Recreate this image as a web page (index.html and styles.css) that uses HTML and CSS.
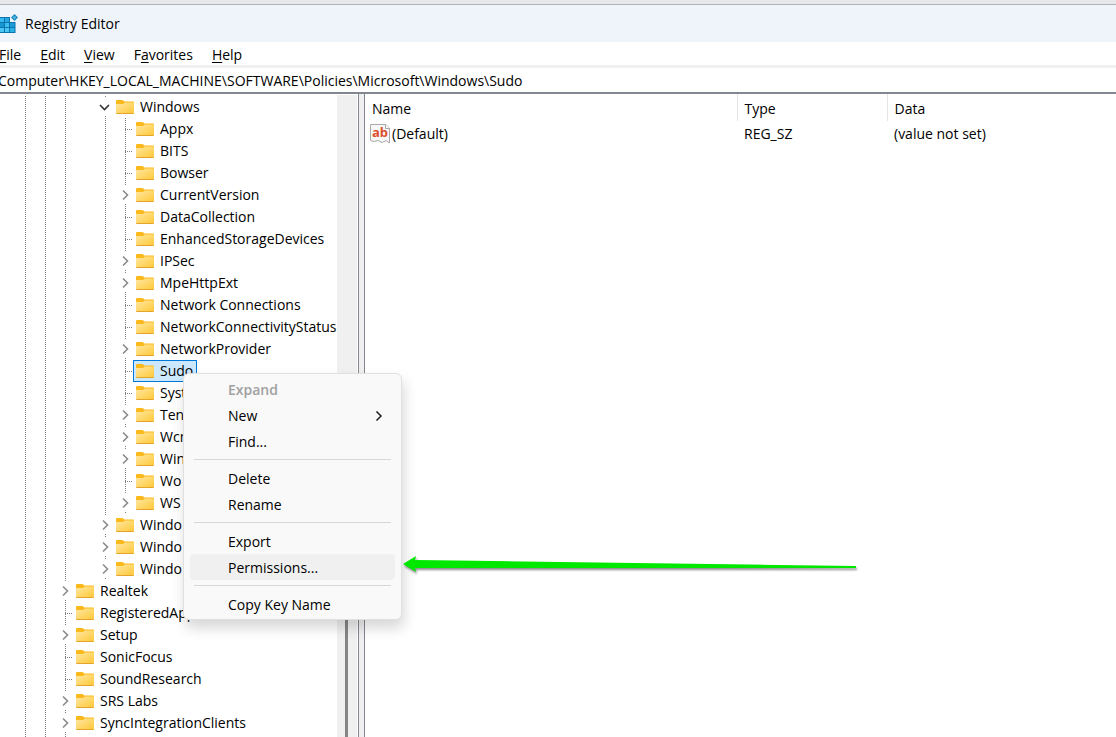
FILE: index.html
```
<!DOCTYPE html>
<html lang="en">

<head>
    <meta charset="UTF-8" />
    <meta name="viewport" content="width=device-width, initial-scale=1.0" />
    <title>Registry Editor</title>
    <link rel="stylesheet" href="styles.css">
</head>

<body>
    <!-- shared icons -->
    <svg class="icon-defs" aria-hidden="true">
        <defs>
            <linearGradient id="folderFill" x1="0" y1="0" x2="1" y2="1">
                <stop offset="0" stop-color="#ffe8a3" />
                <stop offset="1" stop-color="#ffc83a" />
            </linearGradient>
            <symbol id="folder" viewBox="0 0 18 14">
                <path d="M0 1Q0 0 1 0H6.5L8.5 1.500H17.500L18 2V6H0Z" fill="#fbb91c" />
                <path d="M0 4H7L9 2.500H18V13H0Z" fill="url(#folderFill)" />
                <path d="M0 13H18L17.500 14H0.500Z" fill="#e5a52a" />
            </symbol>
            <symbol id="chevron" viewBox="0 0 20 18">
                <path d="M8 4.5L12.5 9L8 13.5" fill="none" stroke="#8b8b8b" stroke-width="1.6" />
            </symbol>
            <symbol id="chevron-open" viewBox="0 0 20 18">
                <path d="M5 7L9.5 11.5L14 7" fill="none" stroke="#333" stroke-width="1.6" />
            </symbol>
        </defs>
    </svg>

    <div class="window">
        <header class="title-bar">
            <svg class="app-icon" viewBox="0 0 20 20" aria-hidden="true">
                <path d="M0 3H12V8H17.500V19H0Z" fill="#0a74ad" />
                <path d="M1 4H6V8H1Z" fill="#35b8ee" />
                <path d="M7 4H11V8H7Z" fill="#27a6e0" />
                <path d="M1 9H6V13H1Z" fill="#1796d4" />
                <path d="M7 9H11V13H7Z" fill="#3dbdf0" />
                <path d="M12 9H16.500V13H12Z" fill="#1c9bd8" />
                <path d="M1 14H6V18H1ZM7 14H11V18H7Z" fill="#4cc6f4" />
                <path d="M12 14H16.500V18H12Z" fill="#2bb0e8" />
                <path d="M16.500 0L20 3.500L16.500 7L13 3.500Z" fill="#1b86bb" />
                <path d="M16.500 1.500L18.500 3.500L16.500 5.500L14.500 3.500Z" fill="#49b4de" />
            </svg>
            <h1 class="title">Registry Editor</h1>
        </header>

        <nav class="menu-bar">
            <button type="button"><u>F</u>ile</button>
            <button type="button"><u>E</u>dit</button>
            <button type="button"><u>V</u>iew</button>
            <button type="button">F<u>a</u>vorites</button>
            <button type="button"><u>H</u>elp</button>
        </nav>

        <input class="address" type="text" aria-label="Address"
            value="Computer\HKEY_LOCAL_MACHINE\SOFTWARE\Policies\Microsoft\Windows\Sudo" />

        <main class="panes">
            <div class="tree-pane">
                <div class="tree">
                    <ul class="lined">
                        <li>
                            <ul class="lined">
                                <li>
                                    <ul class="lined">
                                        <li>
                                            <!-- last key of its branch, so no line here -->
                                            <ul>
                                                <li>
                                                    <ul class="lined">
                                                        <li>
                                                            <div class="row"><svg class="toggle"><use href="#chevron-open" /></svg><span class="key"><svg class="folder"><use href="#folder" /></svg>Windows</span></div>
                                                            <ul class="lined">
                                                                <li class="row leaf"><span class="key"><svg class="folder"><use href="#folder" /></svg>Appx</span></li>
                                                                <li class="row leaf"><span class="key"><svg class="folder"><use href="#folder" /></svg>BITS</span></li>
                                                                <li class="row leaf"><span class="key"><svg class="folder"><use href="#folder" /></svg>Bowser</span></li>
                                                                <li class="row"><svg class="toggle"><use href="#chevron" /></svg><span class="key"><svg class="folder"><use href="#folder" /></svg>CurrentVersion</span></li>
                                                                <li class="row leaf"><span class="key"><svg class="folder"><use href="#folder" /></svg>DataCollection</span></li>
                                                                <li class="row leaf"><span class="key"><svg class="folder"><use href="#folder" /></svg>EnhancedStorageDevices</span></li>
                                                                <li class="row"><svg class="toggle"><use href="#chevron" /></svg><span class="key"><svg class="folder"><use href="#folder" /></svg>IPSec</span></li>
                                                                <li class="row"><svg class="toggle"><use href="#chevron" /></svg><span class="key"><svg class="folder"><use href="#folder" /></svg>MpeHttpExt</span></li>
                                                                <li class="row leaf"><span class="key"><svg class="folder"><use href="#folder" /></svg>Network Connections</span></li>
                                                                <li class="row leaf"><span class="key"><svg class="folder"><use href="#folder" /></svg>NetworkConnectivityStatus</span></li>
                                                                <li class="row"><svg class="toggle"><use href="#chevron" /></svg><span class="key"><svg class="folder"><use href="#folder" /></svg>NetworkProvider</span></li>
                                                                <li class="row leaf"><span class="key selected"><svg class="folder"><use href="#folder" /></svg>Sudo</span></li>
                                                                <li class="row leaf"><span class="key"><svg class="folder"><use href="#folder" /></svg>Syst</span></li>
                                                                <li class="row"><svg class="toggle"><use href="#chevron" /></svg><span class="key"><svg class="folder"><use href="#folder" /></svg>Ten</span></li>
                                                                <li class="row"><svg class="toggle"><use href="#chevron" /></svg><span class="key"><svg class="folder"><use href="#folder" /></svg>Wcm</span></li>
                                                                <li class="row"><svg class="toggle"><use href="#chevron" /></svg><span class="key"><svg class="folder"><use href="#folder" /></svg>Win</span></li>
                                                                <li class="row leaf"><span class="key"><svg class="folder"><use href="#folder" /></svg>Wo</span></li>
                                                                <li class="row"><svg class="toggle"><use href="#chevron" /></svg><span class="key"><svg class="folder"><use href="#folder" /></svg>WS</span></li>
                                                            </ul>
                                                        </li>
                                                        <li class="row"><svg class="toggle"><use href="#chevron" /></svg><span class="key"><svg class="folder"><use href="#folder" /></svg>Windo</span></li>
                                                        <li class="row"><svg class="toggle"><use href="#chevron" /></svg><span class="key"><svg class="folder"><use href="#folder" /></svg>Windo</span></li>
                                                        <li class="row"><svg class="toggle"><use href="#chevron" /></svg><span class="key"><svg class="folder"><use href="#folder" /></svg>Windo</span></li>
                                                    </ul>
                                                </li>
                                            </ul>
                                        </li>
                                        <li class="row"><svg class="toggle"><use href="#chevron" /></svg><span class="key"><svg class="folder"><use href="#folder" /></svg>Realtek</span></li>
                                        <li class="row leaf"><span class="key"><svg class="folder"><use href="#folder" /></svg>RegisteredApp</span></li>
                                        <li class="row"><svg class="toggle"><use href="#chevron" /></svg><span class="key"><svg class="folder"><use href="#folder" /></svg>Setup</span></li>
                                        <li class="row leaf"><span class="key"><svg class="folder"><use href="#folder" /></svg>SonicFocus</span></li>
                                        <li class="row leaf"><span class="key"><svg class="folder"><use href="#folder" /></svg>SoundResearch</span></li>
                                        <li class="row"><svg class="toggle"><use href="#chevron" /></svg><span class="key"><svg class="folder"><use href="#folder" /></svg>SRS Labs</span></li>
                                        <li class="row"><svg class="toggle"><use href="#chevron" /></svg><span class="key"><svg class="folder"><use href="#folder" /></svg>SyncIntegrationClients</span></li>
                                    </ul>
                                </li>
                            </ul>
                        </li>
                    </ul>
                </div>
                <div class="scrollbar">
                    <div class="thumb"></div>
                </div>
            </div>

            <div class="splitter"></div>

            <div class="value-pane">
                <table class="values">
                    <thead>
                        <tr>
                            <th class="col-name">Name</th>
                            <th class="col-type">Type</th>
                            <th>Data</th>
                        </tr>
                    </thead>
                    <tbody>
                        <tr>
                            <td>
                                <span class="value-name">
                                    <svg class="string-icon" viewBox="0 0 20 20" aria-hidden="true">
                                        <path d="M0.500 0.500H15.500L19.500 4V19L16 16.500L12 18.500L8 16.500L4 17.500L0.500 16.500Z" fill="#f7f7f7" stroke="#a9a9a9" />
                                        <path d="M15.500 0.500V4.500H19.500" fill="#fff" stroke="#a9a9a9" />
                                        <text x="2" y="13">ab</text>
                                    </svg>
                                    (Default)
                                </span>
                            </td>
                            <td>REG_SZ</td>
                            <td>(value not set)</td>
                        </tr>
                    </tbody>
                </table>
            </div>
        </main>

        <!-- right click menu of the selected key -->
        <div class="context-menu">
            <button type="button" class="default" disabled>Expand</button>
            <button type="button">New
                <svg class="more" viewBox="0 0 8 10" aria-hidden="true">
                    <path d="M1.500 0.500L6 5L1.500 9.500" />
                </svg>
            </button>
            <button type="button">Find...</button>
            <hr />
            <button type="button">Delete</button>
            <button type="button">Rename</button>
            <hr />
            <button type="button">Export</button>
            <button type="button" class="active">Permissions...</button>
            <hr />
            <button type="button">Copy Key Name</button>
        </div>

        <!-- green pointer to Permissions -->
        <svg class="pointer" viewBox="0 0 460 24" aria-hidden="true">
            <path d="M1 8L14 0L13 4L454 10V12L13 12L14 16Z" />
        </svg>
    </div>
</body>

</html>
```

FILE: styles.css
```
* {
    box-sizing: border-box;
}

body {
    margin: 0;
    background-color: #fff;
    color: #000;
    font-family: "Open Sans", "Noto Sans", sans-serif;
    font-size: 14px;
    line-height: 20px;
}

button,
input {
    font: inherit;
    color: inherit;
    border: none;
    background: none;
    padding: 0;
}

ul {
    list-style: none;
    margin: 0;
    padding: 0;
}

.icon-defs {
    position: absolute;
    width: 0;
    height: 0;
}

.window {
    position: relative;
    display: flex;
    flex-direction: column;
    height: 100vh;
    overflow: hidden;
}

/* title, menu and address bars */
.title-bar {
    display: flex;
    align-items: center;
    gap: 7px;
    height: 42px;
    padding-top: 2px;
    margin-left: -2px;
    background-color: #eff3fa;
    border-top: 4px solid #e6e8eb;
    box-shadow: inset 0 1px #b4b4b4;
    flex-shrink: 0;
}

.app-icon {
    width: 20px;
    height: 20px;
}

.title {
    margin: 0;
    font-size: 14px;
    font-weight: normal;
}

.menu-bar {
    display: flex;
    gap: 19px;
    height: 26px;
    padding-top: 2px;
    margin-left: -1px;
    border-bottom: 3px solid #f0f0f0;
    flex-shrink: 0;
}

.menu-bar u {
    text-underline-offset: 2px;
}

.address {
    height: 26px;
    margin-left: -2px;
    border-bottom: 2px solid #828790;
    flex-shrink: 0;
}

.panes {
    display: flex;
    flex: 1;
    min-height: 0;
}

/* key tree */
.tree-pane {
    display: flex;
    width: 359px;
    border-right: 1px solid #828790;
}

.tree {
    flex: 1;
    min-width: 0;
    padding-top: 2px;
    padding-left: 15px;
    overflow: hidden;
}

.tree ul ul {
    margin-left: 20px;
}

.tree > ul,
.tree > ul > li > ul,
.tree > ul > li > ul > li > ul {
    min-height: 100vh;
}

.tree .lined {
    background-image: linear-gradient(#808080 50%, transparent 50%);
    background-size: 1px 2px;
    background-position: 10px 0;
    background-repeat: repeat-y;
}

.row {
    display: flex;
    align-items: center;
    height: 22px;
    white-space: nowrap;
}

.toggle {
    width: 20px;
    height: 18px;
    background-color: #fff;
    flex-shrink: 0;
}

.leaf::before {
    content: "";
    width: 8px;
    height: 1px;
    margin-left: 10px;
    margin-right: 2px;
    background: linear-gradient(to right, #808080 50%, transparent 50%) 0 0 / 2px 1px;
    flex-shrink: 0;
}

.key {
    display: flex;
    align-items: center;
    gap: 6px;
    height: 22px;
    margin-left: -2px;
    padding: 0 3px 0 2px;
    border: 1px solid transparent;
}

.key.selected {
    background-color: #cce8ff;
    border-color: #0078d7;
}

.folder {
    width: 18px;
    height: 14px;
}

.scrollbar {
    width: 20px;
    margin-top: 1px;
    margin-right: 1px;
    padding-top: 400px;
    background-color: #f0f0f0;
}

.thumb {
    width: 3px;
    height: 100%;
    margin-left: 8px;
    background-color: #858585;
}

.splitter {
    width: 5px;
    background-color: #f0f0f0;
}

/* value list */
.value-pane {
    flex: 1;
    border-left: 1px solid #828790;
}

.values {
    width: 100%;
    border-collapse: collapse;
    table-layout: fixed;
}

.values th {
    height: 27px;
    padding: 2px 7px 0;
    border-right: 1px solid #e5e5e5;
    font-weight: normal;
    text-align: left;
}

.values th:last-child {
    border-right: none;
}

.values td {
    height: 26px;
    padding: 0 7px;
}

.col-name {
    width: 372px;
}

.col-type {
    width: 150px;
}

.value-name {
    display: flex;
    align-items: center;
    gap: 2px;
    margin-left: -2px;
}

.string-icon {
    width: 20px;
    height: 20px;
    overflow: visible;
}

.string-icon text {
    font-size: 13px;
    font-weight: bold;
    fill: #dc4f2c;
}

/* context menu */
.context-menu {
    position: absolute;
    left: 183px;
    top: 373px;
    width: 219px;
    padding: 2px 6px;
    background-color: #f9f9f9;
    border: 1px solid #e0e0e0;
    border-radius: 6px;
    box-shadow: 2px 8px 14px rgba(0, 0, 0, 0.16);
}

.context-menu button {
    display: flex;
    align-items: center;
    justify-content: space-between;
    width: 100%;
    height: 26px;
    padding: 2px 12px 0 38px;
    border-radius: 4px;
}

.context-menu .default {
    font-weight: 600;
}

.context-menu button:disabled {
    color: #a0a0a0;
}

.context-menu .active {
    background-color: #f0f0f0;
}

.context-menu hr {
    margin: 5px 4px;
    border: none;
    border-top: 1px solid #d7d7d7;
}

.more {
    width: 8px;
    height: 10px;
}

.more path {
    fill: none;
    stroke: #222;
    stroke-width: 1.5;
}

.pointer {
    position: absolute;
    left: 402px;
    top: 556px;
    width: 460px;
    height: 24px;
}

.pointer path {
    fill: #00e800;
    filter: drop-shadow(1px 2px 1px rgba(0, 0, 0, 0.45));
}
```
